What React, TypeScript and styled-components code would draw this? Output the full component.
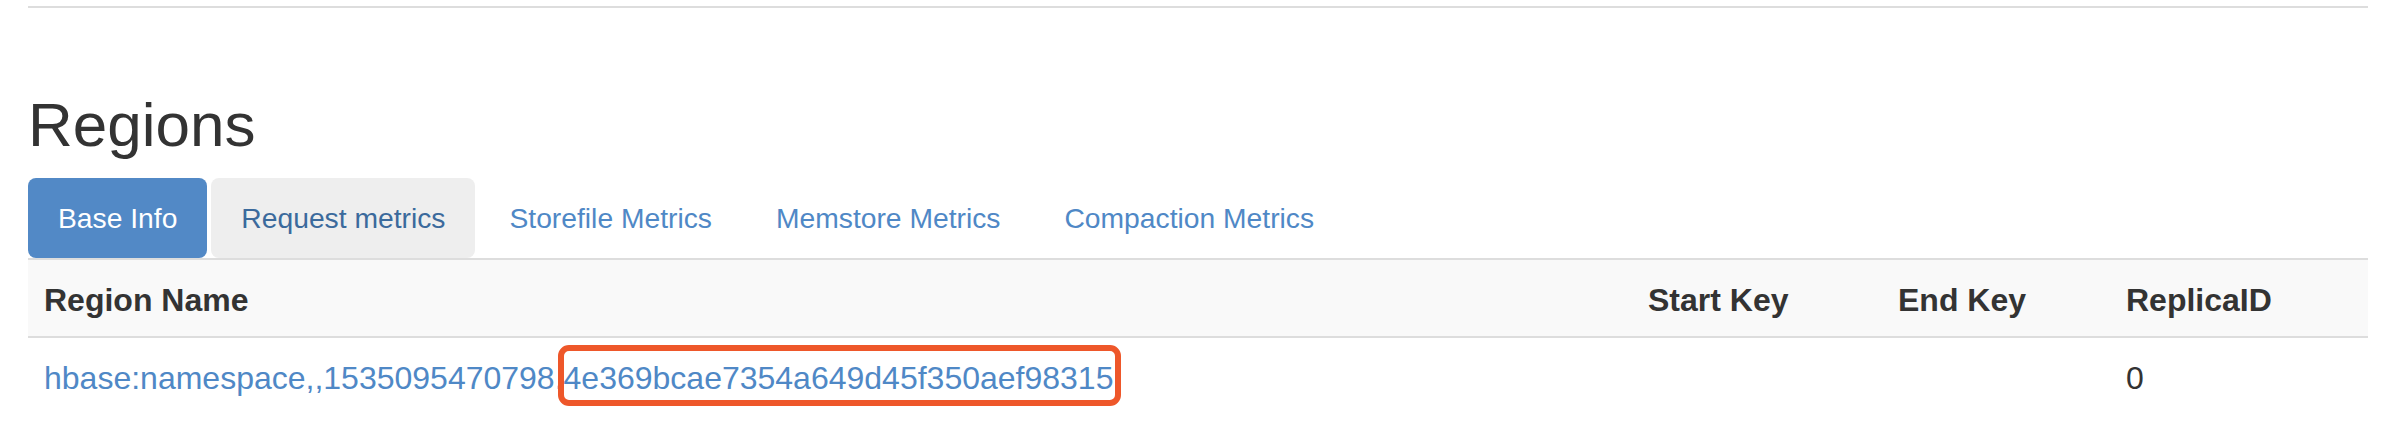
import React from "react";
import styled, { createGlobalStyle } from "styled-components";

const GlobalStyle = createGlobalStyle`
  html, body {
    margin: 0;
    padding: 0;
    background: #ffffff;
    font-family: "Liberation Sans", Arial, Helvetica, sans-serif;
    color: #333333;
  }
`;

const Page = styled.div`
  padding: 6px 0 0 28px;
  width: 2340px;
`;

const TopRule = styled.hr`
  margin: 0;
  border: 0;
  height: 2px;
  background: #dddddd;
`;

const Title = styled.h2`
  margin: 84px 0 20px;
  font-size: 62px;
  font-weight: 500;
  line-height: 66px;
  color: #333333;
`;

const Tabs = styled.ul`
  display: flex;
  gap: 4px;
  list-style: none;
  margin: 0;
  padding: 0;
`;

type TabState = "active" | "hover" | "idle";

const TabLink = styled.a<{ $state: TabState }>`
  display: block;
  padding: 20px 30px;
  font-size: 28.25px;
  line-height: 40px;
  border-radius: 8px;
  text-decoration: none;
  cursor: pointer;
  background: ${(p) =>
    p.$state === "active" ? "#5289c6" : p.$state === "hover" ? "#eeeeee" : "transparent"};
  color: ${(p) =>
    p.$state === "active" ? "#ffffff" : p.$state === "hover" ? "#3b6a9c" : "#4f88c6"};
`;

const Table = styled.table`
  width: 2340px;
  border-collapse: collapse;
  table-layout: fixed;
  font-size: 32px;
`;

const Row = styled.tr<{ $head?: boolean }>`
  background: ${(p) => (p.$head ? "#f9f9f9" : "#ffffff")};
`;

const HeadCell = styled.th`
  text-align: left;
  font-weight: 700;
  color: #333333;
  padding: 17px 16px 13px;
  line-height: 46px;
  border-top: 2px solid #dddddd;
`;

const Cell = styled.td`
  padding: 17px 16px 13px;
  line-height: 46px;
  border-top: 2px solid #dddddd;
  color: #333333;
  white-space: nowrap;
`;

const RegionLink = styled.a`
  color: #4f88c6;
  text-decoration: none;
`;

const Highlight = styled.span`
  position: relative;
  &::after {
    content: "";
    position: absolute;
    left: -6px;
    right: -8px;
    top: -15px;
    bottom: -10px;
    border: 6px solid #ee572a;
    border-radius: 11px;
    pointer-events: none;
  }
`;

const tabs: { label: string; state: TabState }[] = [
  { label: "Base Info", state: "active" },
  { label: "Request metrics", state: "hover" },
  { label: "Storefile Metrics", state: "idle" },
  { label: "Memstore Metrics", state: "idle" },
  { label: "Compaction Metrics", state: "idle" },
];

export default function App() {
  return (
    <>
      <GlobalStyle />
      <Page>
        <TopRule />
        <Title>Regions</Title>
        <Tabs>
          {tabs.map((t) => (
            <li key={t.label}>
              <TabLink $state={t.state}>{t.label}</TabLink>
            </li>
          ))}
        </Tabs>
        <Table>
          <colgroup>
            <col style={{ width: 1604 }} />
            <col style={{ width: 250 }} />
            <col style={{ width: 228 }} />
            <col style={{ width: 258 }} />
          </colgroup>
          <tbody>
            <Row $head>
              <HeadCell>Region Name</HeadCell>
              <HeadCell>Start Key</HeadCell>
              <HeadCell>End Key</HeadCell>
              <HeadCell>ReplicaID</HeadCell>
            </Row>
            <Row>
              <Cell>
                <RegionLink>
                  hbase:namespace,,1535095470798.
                  <Highlight>4e369bcae7354a649d45f350aef98315</Highlight>
                </RegionLink>
              </Cell>
              <Cell></Cell>
              <Cell></Cell>
              <Cell>0</Cell>
            </Row>
          </tbody>
        </Table>
      </Page>
    </>
  );
}
